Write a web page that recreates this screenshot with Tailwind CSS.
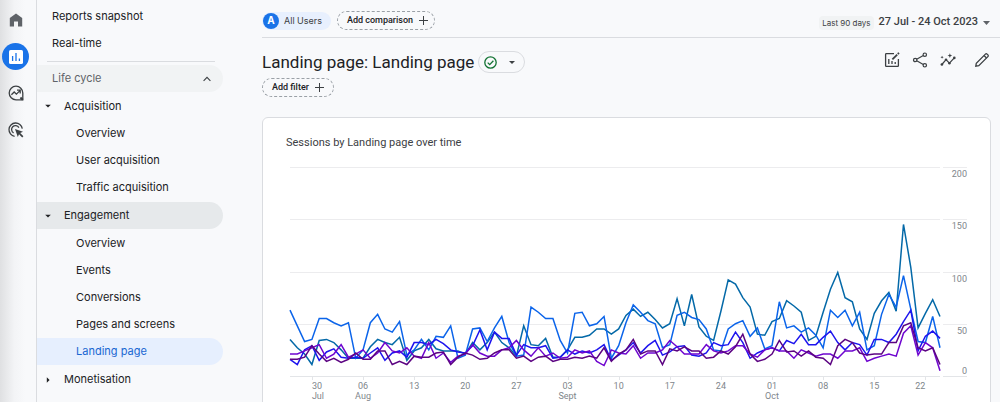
<!DOCTYPE html>
<html lang="en">
<head>
    <meta charset="UTF-8">
    <meta name="viewport" content="width=device-width, initial-scale=1.0">
    <title>Analytics - Landing page</title>
    <script src="https://cdn.jsdelivr.net/npm/@tailwindcss/browser@4"></script>
</head>
<body class="bg-[#f8f9fb] text-[#202124] font-['Inter','Liberation_Sans',sans-serif]">
    <div class="flex h-screen overflow-hidden">

        <!-- Icon rail -->
        <aside class="w-[37px] shrink-0 border-r border-[#dadce0] bg-linear-to-r from-[#dfe0e2] via-[#f3f4f6] via-40% to-[#f8f9fb] to-70% flex flex-col items-center gap-[9px] pt-[6px] pr-[5px]">
            <a href="#" aria-label="Home" class="w-[27px] h-[28px] flex items-center justify-center text-[#5f6368]">
                <svg class="w-[14px] h-[14px]" viewBox="0 0 14 14" fill="currentColor"><path d="M7 0.4 0.8 5.1V13.6H5V8.4H9V13.6H13.2V5.1Z"/></svg>
            </a>
            <a href="#" aria-label="Reports" class="w-[27px] h-[27px] rounded-full bg-[#1a73e8] text-white flex items-center justify-center">
                <svg class="w-[14px] h-[14px]" viewBox="0 0 14 14"><rect width="14" height="14" rx="1.6" fill="#fff"/><path d="M3.6 6V11M7 3V11M10.4 8.6V11" stroke="#1a73e8" stroke-width="1.3"/></svg>
            </a>
            <a href="#" aria-label="Explore" class="w-[27px] h-[28px] flex items-center justify-center text-[#3c4043]">
                <svg class="w-4 h-4" viewBox="0 0 16 16" fill="none" stroke="currentColor" stroke-width="1.3"><path d="M14.8 14.8H8A6.8 6.8 0 1 1 14.8 8Z"/><path d="M3.4 9.8 6.2 7 8.4 9.2 12 5.6M9 5.2H12.2V8.4"/><path d="M14.8 14.8 12.4 12.6" stroke-width="2"/></svg>
            </a>
            <a href="#" aria-label="Advertising" class="w-[27px] h-[27px] flex items-center justify-center text-[#3c4043]">
                <svg class="w-4 h-4" viewBox="0 0 16 16" fill="none" stroke="currentColor" stroke-width="1.3"><path d="M6.6 14.3A6.7 6.7 0 1 1 14.3 6.6"/><path d="M5.6 10.9A3.9 3.9 0 1 1 10.9 5.6"/><path d="M7 7 15 9.8 12.2 11 15.4 14.2 14.2 15.4 11 12.2 9.8 15Z" fill="currentColor" stroke="none"/></svg>
            </a>
        </aside>

        <!-- Report navigation -->
        <nav class="w-[186px] shrink-0 pt-[3px] text-[11px] text-[#202124]">
            <a href="#" class="flex items-center h-[27px] pl-[15px]">Reports snapshot</a>
            <a href="#" class="flex items-center h-[27px] pl-[15px]">Real-time</a>
            <div class="mt-1 mb-[3px] ml-[10px] mr-2 border-t border-[#dadce0]"></div>
            <button type="button" class="w-full flex items-center justify-between h-[27px] pl-[15px] pr-3 rounded-r-full bg-[#f1f3f4] text-[#5f6368]">
                Life cycle
                <svg class="w-2 h-2" viewBox="0 0 8 8" fill="none" stroke="#3c4043" stroke-width="1.1"><path d="M0.6 5.8 4 2.4 7.4 5.8"/></svg>
            </button>
            <button type="button" class="w-full flex items-center gap-3 h-[28px] pl-[7px]">
                <svg class="w-2 h-2" viewBox="0 0 8 8" fill="currentColor"><path d="M1.2 2.8H6.8L4 5.6Z"/></svg>
                Acquisition
            </button>
            <ul class="pb-px">
                <li><a href="#" class="flex items-center h-[27px] pl-[39px]">Overview</a></li>
                <li><a href="#" class="flex items-center h-[27px] pl-[39px]">User acquisition</a></li>
                <li><a href="#" class="flex items-center h-[27px] pl-[39px]">Traffic acquisition</a></li>
            </ul>
            <button type="button" class="w-full flex items-center gap-3 h-[27px] pl-[7px] rounded-r-full bg-[#e6e9eb]">
                <svg class="w-2 h-2" viewBox="0 0 8 8" fill="currentColor"><path d="M1.2 2.8H6.8L4 5.6Z"/></svg>
                Engagement
            </button>
            <ul class="py-px">
                <li><a href="#" class="flex items-center h-[27px] pl-[39px]">Overview</a></li>
                <li><a href="#" class="flex items-center h-[27px] pl-[39px]">Events</a></li>
                <li><a href="#" class="flex items-center h-[27px] pl-[39px]">Conversions</a></li>
                <li><a href="#" class="flex items-center h-[27px] pl-[39px]">Pages and screens</a></li>
                <li><a href="#" class="flex items-center h-[27px] pl-[39px] rounded-r-full bg-[#e6effe] text-[#1967d2]">Landing page</a></li>
            </ul>
            <button type="button" class="w-full flex items-center gap-3 h-[27px] pl-[7px]">
                <svg class="w-2 h-2" viewBox="0 0 8 8" fill="currentColor"><path d="M2.8 1.2V6.8L5.6 4Z"/></svg>
                Monetisation
            </button>
        </nav>

        <!-- Report -->
        <main class="flex-1 min-w-0 pl-[39px] font-['Roboto','Liberation_Sans',sans-serif]">
            <header class="flex items-center justify-between h-[38px] pt-1 pr-[10px] border-b border-[#dadce0]">
                <div class="flex items-center gap-[6px]">
                    <button type="button" class="flex items-center gap-[5px] h-[18px] pl-px pr-[9px] rounded-full bg-[#e8f0fe] font-['Inter',sans-serif] text-[9px] text-[#3c4043]">
                        <span class="w-4 h-4 rounded-full bg-[#1a73e8] text-white text-[10px] font-bold flex items-center justify-center">A</span>
                        All Users
                    </button>
                    <button type="button" class="flex items-center gap-[6px] h-[19px] pl-[9px] pr-[6px] rounded-full border border-dashed border-[#9aa0a6] text-[9px] font-medium">
                        Add comparison
                        <svg class="w-[9px] h-[9px]" viewBox="0 0 9 9" stroke="#3c4043"><path d="M4.5 0V9M0 4.5H9"/></svg>
                    </button>
                </div>
                <button type="button" class="flex items-center gap-[5px] pt-1 text-[11px] font-medium text-[#3c4043]">
                    <span class="px-[3px] py-px bg-[#f1f3f4] rounded-sm font-['Inter',sans-serif] text-[8px] font-normal">Last 90 days</span>
                    27 Jul - 24 Oct 2023
                    <svg class="w-[7px] h-[4px]" viewBox="0 0 7 4" fill="#5f6368"><path d="M0 0H7L3.5 4Z"/></svg>
                </button>
            </header>

            <div class="flex justify-between pt-[13px] pr-[10px]">
                <div>
                    <div class="flex items-center gap-1">
                        <h1 class="text-[17px] leading-[22px]">Landing page: Landing page</h1>
                        <button type="button" aria-label="Data quality" class="flex items-center gap-3 h-[22px] pl-[5px] pr-[9px] rounded-full border border-[#dadce0]">
                            <svg class="w-[13px] h-[13px]" viewBox="0 0 13 13" fill="none" stroke="#137333" stroke-width="1.3"><circle cx="6.5" cy="6.5" r="5.7"/><path d="M3.7 6.6 5.7 8.6 9.4 4.7"/></svg>
                            <svg class="w-[6px] h-[3px]" viewBox="0 0 6 3" fill="#3c4043"><path d="M0 0H6L3 3Z"/></svg>
                        </button>
                    </div>
                    <button type="button" class="flex items-center gap-[6px] h-[19px] mt-[5px] pl-[9px] pr-[9px] rounded-full border border-dashed border-[#9aa0a6] text-[9px] font-medium">
                        Add filter
                        <svg class="w-[9px] h-[9px]" viewBox="0 0 9 9" stroke="#3c4043"><path d="M4.5 0V9M0 4.5H9"/></svg>
                    </button>
                </div>
                <div class="flex items-center gap-3 h-[18px] text-[#3c4043]">
                    <button type="button" aria-label="Edit comparisons">
                        <svg class="w-4 h-4" viewBox="0 0 16 16" fill="none" stroke="currentColor" stroke-width="1.3"><path d="M10 1.7H2.3A.7.7 0 0 0 1.6 2.4V13.7A.7.7 0 0 0 2.3 14.4H13.7A.7.7 0 0 0 14.4 13.7V7"/><path d="M4.8 7V12M8 9V12M11.2 10V12"/><path d="M8.4 7.4 13.2 2.6" stroke-width="1.8"/><path d="M13.8 2 15 .8" stroke-width="1.8"/></svg>
                    </button>
                    <button type="button" aria-label="Share this report">
                        <svg class="w-4 h-4" viewBox="0 0 16 16" fill="none" stroke="currentColor" stroke-width="1.2"><circle cx="3.2" cy="8" r="1.7"/><circle cx="12.8" cy="2.7" r="1.7"/><circle cx="12.8" cy="13.3" r="1.7"/><path d="M4.7 7.2 11.3 3.5M4.7 8.8 11.3 12.5"/></svg>
                    </button>
                    <button type="button" aria-label="Insights">
                        <svg class="w-4 h-4" viewBox="0 0 17 16" fill="currentColor"><path d="M2 12.8 6.4 7.6 10 11.4 15.2 5.8" fill="none" stroke="currentColor" stroke-width="1.3"/><circle cx="2" cy="12.8" r="1.4"/><circle cx="6.4" cy="7.6" r="1.3"/><circle cx="10" cy="11.4" r="1.3"/><circle cx="15.2" cy="5.8" r="1.4"/><path d="M10.5 .8 11.2 2.6 13 3.3 11.2 4 10.5 5.8 9.8 4 8 3.3 9.8 2.6ZM2.2 3.4 2.7 4.6 3.9 5.1 2.7 5.6 2.2 6.8 1.7 5.6 .5 5.1 1.7 4.6Z"/></svg>
                    </button>
                    <button type="button" aria-label="Customise report" class="ml-[6px]">
                        <svg class="w-4 h-4" viewBox="0 0 16 16" fill="none" stroke="currentColor" stroke-width="1.3"><path d="M1.8 14.2 2.3 11.2 11.4 2.1A1.2 1.2 0 0 1 13.1 2.1L13.9 2.9A1.2 1.2 0 0 1 13.9 4.6L4.8 13.7Z"/><path d="M10 3.5 12.5 6"/></svg>
                    </button>
                </div>
            </div>

            <section class="mt-5 mr-[9px] h-[320px] rounded-md border border-[#dadce0] bg-white pl-[27px] pr-[23px] pt-[18px]">
                <h2 class="-ml-1 text-[11px] leading-[14px] text-[#3c4043]">Sessions by Landing page over time</h2>

                <div class="flex gap-[3px] mt-[17px] text-[9px] leading-[10px] text-[#80868b]">
                    <div class="relative flex-1 h-[210px] flex flex-col border-b border-[#e3e5e8]">
                        <div class="flex-1 border-t border-[#ececee]"></div>
                        <div class="flex-1 border-t border-[#ececee]"></div>
                        <div class="flex-1 border-t border-[#ececee]"></div>
                        <div class="flex-1 border-t border-[#ececee]"></div>
                        <svg id="chart" class="absolute inset-0 w-full h-full overflow-visible" viewBox="0 0 89 200" preserveAspectRatio="none" fill="none"></svg>
                        <div id="dates" class="absolute inset-x-0 top-full"></div>
                    </div>
                    <div class="w-6 h-[210px] flex flex-col border-b border-[#e3e5e8] text-right">
                        <div class="flex-1 border-t border-[#ececee] pt-px">200</div>
                        <div class="flex-1 border-t border-[#ececee] pt-px">150</div>
                        <div class="flex-1 border-t border-[#ececee] pt-px">100</div>
                        <div class="flex-1 border-t border-[#ececee] pt-px flex flex-col justify-between"><span>50</span><span>0</span></div>
                    </div>
                </div>
            </section>
        </main>
    </div>

    <script>
        // Daily sessions, 27 Jul - 24 Oct
        const series = [
            { color: '#0469a8', values: [35,27,21,11,34,35,32,25,17,17,17,28,35,32,30,37,15,24,27,35,26,24,24,24,21,32,25,32,42,32,27,19,48,30,29,36,18,18,25,37,37,39,45,45,40,45,58,64,57,61,54,46,50,74,48,78,47,38,34,62,92,88,75,66,40,39,52,55,72,67,61,34,38,61,83,99,75,71,45,35,60,72,80,62,145,104,46,60,73,57] },
            { color: '#0b64ea', values: [63,48,33,35,55,55,51,48,51,17,25,51,59,45,42,52,20,25,35,25,38,37,48,17,20,45,46,33,46,57,32,19,20,66,61,55,55,34,22,60,61,48,50,57,17,29,51,68,61,53,50,27,30,58,61,56,54,45,25,24,45,50,53,38,46,26,29,71,46,48,42,46,39,27,63,56,63,48,61,25,29,59,78,66,96,64,33,32,57,27] },
            { color: '#1e14ee', values: [16,11,25,29,15,23,26,18,17,18,17,22,27,15,22,24,18,32,32,30,35,31,25,23,22,29,44,25,42,36,36,20,30,27,27,29,17,18,25,21,24,22,25,30,15,20,25,32,22,29,34,20,23,28,29,20,19,22,32,29,30,42,32,17,22,25,27,24,34,31,40,30,30,37,43,32,25,32,30,20,35,35,32,40,52,63,24,38,43,36] },
            { color: '#6f06cf', values: [21,21,24,27,30,17,21,30,18,21,25,17,22,32,24,22,27,19,17,32,17,22,13,19,21,30,22,19,19,25,27,34,25,19,27,19,22,17,18,25,22,24,14,10,25,22,21,29,17,22,22,25,34,28,21,21,21,30,24,22,24,29,29,21,18,25,27,24,24,17,25,22,19,21,21,17,24,24,27,14,17,19,21,19,41,48,20,32,27,5] },
            { color: '#5c0482', values: [16,16,18,29,21,14,17,13,16,22,16,16,24,24,11,14,11,19,18,18,22,23,11,18,22,20,16,17,22,25,25,17,19,14,18,19,14,16,16,18,17,19,17,27,14,21,25,35,21,24,24,11,26,24,28,24,24,17,18,24,21,28,40,21,14,16,21,34,23,24,19,24,18,17,11,29,35,32,22,20,21,21,32,32,48,51,27,24,27,11] }
        ];

        const chart = document.getElementById('chart');
        series.forEach((s) => {
            const line = document.createElementNS('http://www.w3.org/2000/svg', 'polyline');
            line.setAttribute('points', s.values.map((v, day) => day + ',' + (200 - v)).join(' '));
            line.setAttribute('stroke', s.color);
            line.setAttribute('stroke-width', '1.5');
            line.setAttribute('vector-effect', 'non-scaling-stroke');
            chart.appendChild(line);
        });

        // Weekly ticks, the first and last labels lean inwards
        const ticks = [
            [3, '30', 'Jul'], [10, '06', 'Aug'], [17, '13', ''], [24, '20', ''], [31, '27', ''], [38, '03', 'Sept'], [45, '10', ''],
            [52, '17', ''], [59, '24', ''], [66, '01', 'Oct'], [73, '08', ''], [80, '15', ''], [87, '22', '']
        ];
        const dates = document.getElementById('dates');
        ticks.forEach(([day, date, month], i) => {
            const tick = document.createElement('div');
            tick.className = 'absolute top-0 w-px h-1 bg-[#e3e5e8]';
            tick.style.left = (day / 89 * 100) + '%';
            const label = document.createElement('div');
            label.className = 'absolute top-[5px] -translate-x-1/2 text-center';
            if (i === 0) label.className = 'absolute top-[5px] text-left';
            if (i === ticks.length - 1) label.className = 'absolute top-[5px] -translate-x-full text-right';
            label.style.left = (day / 89 * 100) + '%';
            label.innerHTML = date + '<br>' + month;
            dates.append(tick, label);
        });
    </script>
</body>
</html>
